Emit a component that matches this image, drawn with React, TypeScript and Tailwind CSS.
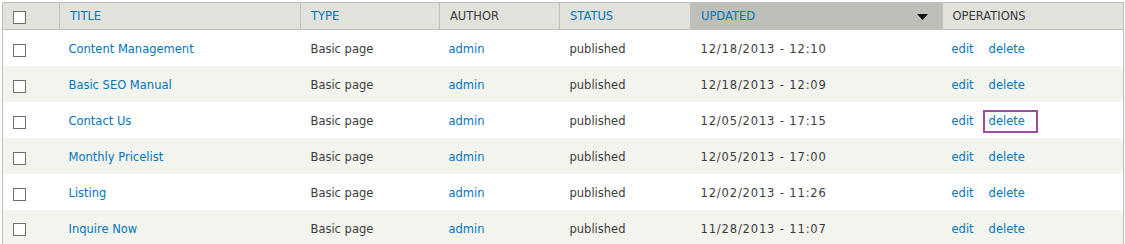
import { Fragment } from 'react';

interface Row {
  title: string;
  updated: string;
  highlight?: boolean;
}

const rows: Row[] = [
  { title: 'Content Management', updated: '12/18/2013 - 12:10' },
  { title: 'Basic SEO Manual', updated: '12/18/2013 - 12:09' },
  { title: 'Contact Us', updated: '12/05/2013 - 17:15', highlight: true },
  { title: 'Monthly Pricelist', updated: '12/05/2013 - 17:00' },
  { title: 'Listing', updated: '12/02/2013 - 11:26' },
  { title: 'Inquire Now', updated: '11/28/2013 - 11:07' },
];

const Checkbox = () => (
  <span className="block w-[13px] h-[13px] border border-[#707070] bg-white" />
);

const App = () => {
  return (
    <div className="w-[1125px] h-[244px] bg-white pt-[2px] pl-[2px] overflow-hidden font-['DejaVu_Sans',Verdana,sans-serif] text-[11.5px] text-[#3b3b3b]">
      <table className="table-fixed border-collapse w-[1121px] border border-[#bebfb9]">
        <colgroup>
          <col className="w-[57px]" />
          <col className="w-[241px]" />
          <col className="w-[139px]" />
          <col className="w-[120px]" />
          <col className="w-[131px]" />
          <col className="w-[252px]" />
          <col className="w-[181px]" />
        </colgroup>
        <thead>
          <tr className="h-[27px] bg-[#e1e2dc] border-b border-[#bebfb9] text-left uppercase">
            <th className="pl-[10px] pt-[3px] font-normal border-r border-[#bebfb9]">
              <Checkbox />
            </th>
            <th className="pl-[10px] pt-[1px] font-normal border-r border-[#bebfb9] text-[#0074bd]">Title</th>
            <th className="pl-[10px] pt-[1px] font-normal border-r border-[#bebfb9] text-[#0074bd]">Type</th>
            <th className="pl-[10px] pt-[1px] font-normal border-r border-[#bebfb9]">Author</th>
            <th className="pl-[10px] pt-[1px] font-normal border-r border-[#bebfb9] text-[#0074bd]">Status</th>
            <th className="pl-[10px] pr-[15px] pt-[1px] font-normal bg-[#bebfb9] text-[#0074bd]">
              <div className="flex items-center justify-between">
                <span>Updated</span>
                <svg width="11" height="6" viewBox="0 0 11 6">
                  <path d="M0 0 L11 0 L5.5 6 Z" fill="#111" />
                </svg>
              </div>
            </th>
            <th className="pl-[10px] pt-[1px] font-normal">Operations</th>
          </tr>
        </thead>
        <tbody>
          {rows.map((row, i) => (
            <Fragment key={row.title}>
              <tr className={`h-[36px] ${i % 2 === 0 ? 'bg-white' : 'bg-[#f3f4ee]'}`}>
                <td className="pl-[10px] pt-[5px]">
                  <Checkbox />
                </td>
                <td className="pl-[9px] pt-[4px] text-[#0074bd]">{row.title}</td>
                <td className="pl-[10px] pt-[4px]">Basic page</td>
                <td className="pl-[9px] pt-[4px] text-[#0074bd]">admin</td>
                <td className="pl-[10px] pt-[4px]">published</td>
                <td className="pl-[10px] pt-[4px] tracking-[0.85px]">{row.updated}</td>
                <td className="pl-[9px] pt-[4px] text-[#0074bd]">
                  <span>edit</span>
                  {row.highlight ? (
                    <span className="inline-block ml-[9px] border-2 border-[#9b4ba1] pl-[4px] pr-[11px] py-[2px] -my-[6px] leading-[15px]">
                      delete
                    </span>
                  ) : (
                    <span className="ml-[15px]">delete</span>
                  )}
                </td>
              </tr>
            </Fragment>
          ))}
        </tbody>
      </table>
    </div>
  );
};

export default App;
